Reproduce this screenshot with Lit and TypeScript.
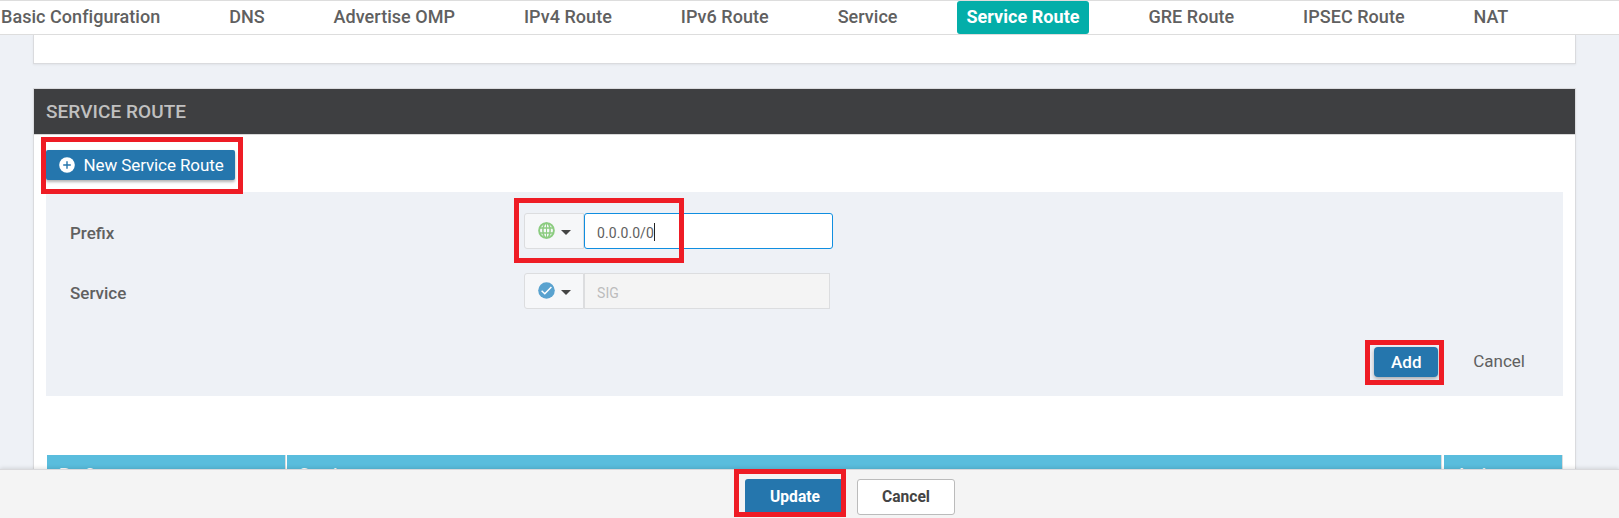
import { LitElement, html, css, svg } from "lit";
import { customElement, state } from "lit/decorators.js";

const TABS = ["Basic Configuration", "DNS", "Advertise OMP", "IPv4 Route", "IPv6 Route", "Service", "Service Route", "GRE Route", "IPSEC Route", "NAT"];

const plusIcon = html`<svg viewBox="0 0 16 16" width="16" height="16">${svg`<circle cx="8" cy="8" r="7.8" fill="#fff"/><path d="M8 4.2v7.6M4.2 8h7.6" stroke="#2576ad" stroke-width="1.4"/>`}</svg>`;
const globeIcon = html`<svg viewBox="0 0 17 17" width="17" height="17">${svg`<g fill="none" stroke="#8ccc80" stroke-width="1.9"><circle cx="8.5" cy="8.5" r="7.4"/><ellipse cx="8.5" cy="8.5" rx="3.6" ry="7.4" stroke-width="1.5"/><path d="M1.5 6h14M1.5 11h14" stroke-width="1.7"/><path d="M8.5 1v15" stroke-width="1"/></g>`}</svg>`;
const checkIcon = html`<svg viewBox="0 0 17 17" width="17" height="17">${svg`<circle cx="8.5" cy="8.5" r="8.3" fill="#59a2cf"/><path d="M3.6 8.8l3.2 3 6.6-6.8" fill="none" stroke="#fff" stroke-width="1.5"/>`}</svg>`;
const caretIcon = html`<svg class="caret" viewBox="0 0 10 5" width="10" height="5"><path d="M0 0h10L5 5z" fill="#444"/></svg>`;

@customElement("app-root")
export class AppRoot extends LitElement {
  @state() active = "Service Route";

  static styles = css`
    :host { display: block; position: relative; height: 518px; overflow: hidden; background: #eef1f6; font-family: Roboto, sans-serif; color: #606060; }
    * { box-sizing: border-box; }
    svg { display: block; flex: none; }
    .page { display: flex; flex-direction: column; height: 518px; }
    nav { display: flex; flex: none; height: 35px; gap: 50.9px; background: #fff; border: solid #ddd; border-width: 1px 0; }
    .tab { padding: 0 9px; font-size: 18px; letter-spacing: .04px; line-height: 32px; font-weight: 500; height: 33px; white-space: nowrap; border-radius: 3px; cursor: pointer; }
    .tab:first-child { margin-left: -8px; }
    .tab.on { background: #03aea9; color: #fff; font-weight: 700; }
    main { flex: 1; min-height: 0; overflow: hidden; padding: 0 43px 0 33px; }
    .card { background: #fff; border: 1px solid #dadbde; box-shadow: 0 1px 2px rgba(0,0,0,.06); }
    .prev { height: 29px; border-top: 0; margin-bottom: 24px; }
    .section { height: 500px; }
    h2 { margin: 0; height: 46px; background: #3e3f41; border-bottom: 1px solid #d8d8d8; padding-left: 12px; font-size: 19px; letter-spacing: .06px; font-weight: 500; line-height: 45px; color: #c0c0c0; }
    .body { padding: 15px 12px 0; }
    button { font-family: inherit; margin: 0; border: 0; padding: 0; background: none; color: inherit; }
    .new { display: flex; align-items: center; width: 189px; height: 30px; padding-left: 13px; gap: 8.5px; border-radius: 2px; background: #2576ad; color: #fff; font-size: 17px; letter-spacing: -.1px; white-space: nowrap; box-shadow: 0 2px 3px rgba(0,0,0,.3); }
    .form { margin-top: 12px; height: 204px; background: #eef1f6; padding: 21px 38px 0 24px; }
    .row { display: flex; height: 60px; }
    .label { width: 454px; font-size: 17px; font-weight: 500; line-height: 40px; }
    .scope { display: flex; align-items: center; width: 60px; height: 36px; padding: 0 12px 1px 13px; justify-content: space-between; border: 1px solid #dcdddf; border-radius: 3px 0 0 3px; background: #f6f7f9; }
    .caret { margin-top: 4px; }
    .field { width: 249px; height: 36px; padding-left: 12px; font-size: 14px; letter-spacing: .08px; line-height: 38px; background: #fff; border: 1px solid #108ee0; border-radius: 3px; display: flex; }
    .field.off { width: 246px; background: #f4f4f4; border-color: #dcdddf; border-radius: 0; color: #bcbcbc; }
    .cursor { width: 1px; height: 18px; margin-top: 9px; background: #222; }
    .actions { display: flex; justify-content: flex-end; align-items: center; gap: 35px; height: 30px; margin-top: 14px; }
    .add { width: 64px; height: 30px; background: #2576ad; color: #fff; border-radius: 4px; font-size: 17px; font-weight: 500; box-shadow: 0 2px 4px rgba(0,0,0,.3); }
    .link { font-size: 17px; padding-bottom: 2px; }
    .table { display: grid; grid-template-columns: 239px 1155px 120px; gap: 1px; margin: 59px 0 0 1px; }
    .th { height: 45px; background: #5abddd; border-right: 1px solid #ddd; padding: 9px 0 0 12px; font-size: 17px; font-weight: 500; color: #fff; }
    .th:last-child { margin-left: 1px; }
    footer { display: flex; flex: none; height: 49px; gap: 14px; padding: 9px 0 0 745px; background: #f4f4f4; border-top: 1px solid #d9d9dc; box-shadow: 0 -1px 4px rgba(0,0,0,.12); position: relative; }
    .update, .cancel { width: 98px; height: 36px; border-radius: 3px; font-size: 15.6px; font-weight: 700; padding-bottom: 1px; }
    .update { background: #2576ad; color: #fff; padding-left: 2px; }
    .cancel { background: #fff; border: 1px solid #bbb; color: #444; }
    .mark { position: absolute; border: 5px solid #ee1c25; pointer-events: none; }
    .m-new { left: 41px; top: 137px; width: 202px; height: 57px; }
    .m-prefix { left: 514px; top: 198px; width: 170px; height: 65px; }
    .m-add { left: 1365px; top: 340px; width: 79px; height: 45px; }
    .m-update { left: 734px; top: 469px; width: 112px; height: 48px; }
  `;

  render() {
    return html`
      <div class="page">
        <nav>${TABS.map((t) => html`<div class="tab ${t === this.active ? "on" : ""}" @click=${() => (this.active = t)}>${t}</div>`)}</nav>
        <main>
          <section class="card prev"></section>
          <section class="card section">
            <h2>SERVICE ROUTE</h2>
            <div class="body">
              <button class="new">${plusIcon}<span>New Service Route</span></button>
              <div class="form">
                <div class="row">
                  <div class="label">Prefix</div>
                  <div class="scope">${globeIcon}${caretIcon}</div>
                  <div class="field"><span>0.0.0.0/0</span><span class="cursor"></span></div>
                </div>
                <div class="row">
                  <div class="label">Service</div>
                  <div class="scope">${checkIcon}${caretIcon}</div>
                  <div class="field off">SIG</div>
                </div>
                <div class="actions"><button class="add">Add</button><button class="link">Cancel</button></div>
              </div>
              <div class="table">
                <div class="th">Prefix</div><div class="th">Service</div><div class="th">Action</div>
              </div>
            </div>
          </section>
        </main>
        <footer><button class="update">Update</button><button class="cancel">Cancel</button></footer>
      </div>
      <div class="mark m-new"></div>
      <div class="mark m-prefix"></div>
      <div class="mark m-add"></div>
      <div class="mark m-update"></div>
    `;
  }
}
